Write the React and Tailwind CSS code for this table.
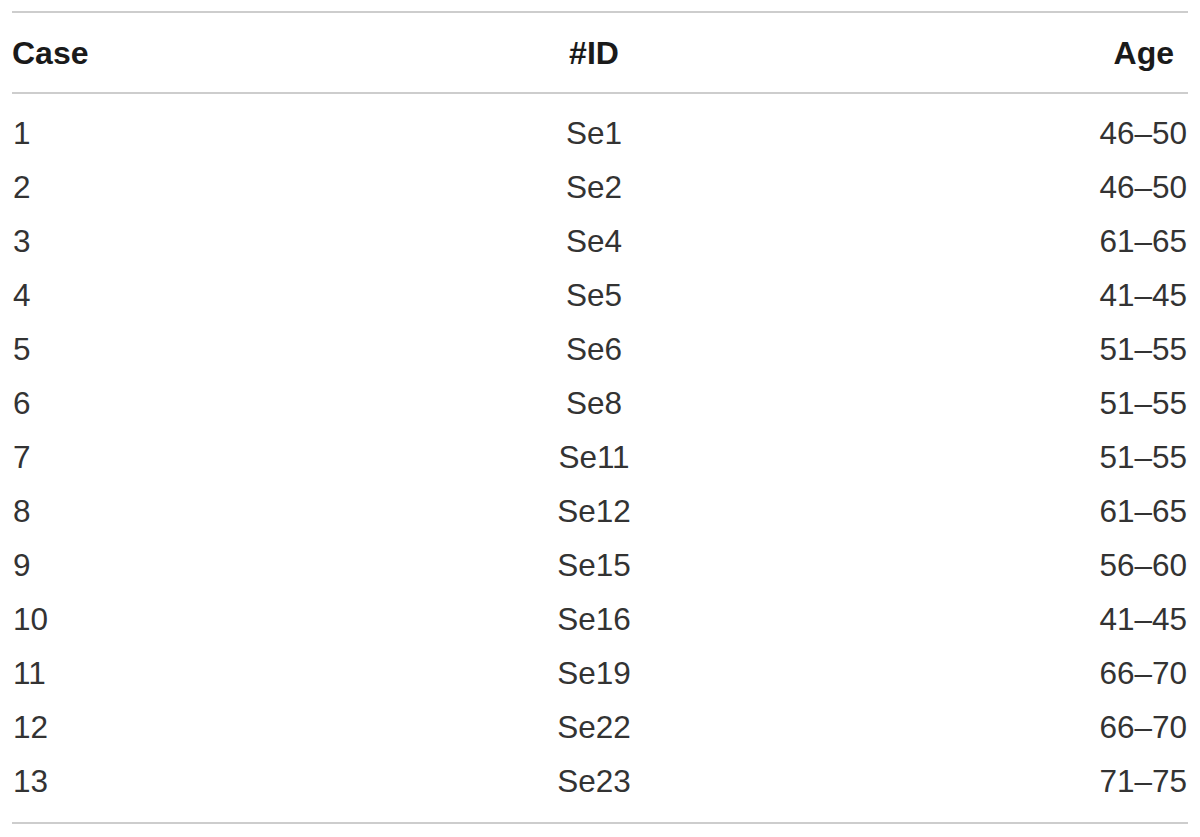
import React from "react";

const rows = [
  ["1", "Se1", "46–50"],
  ["2", "Se2", "46–50"],
  ["3", "Se4", "61–65"],
  ["4", "Se5", "41–45"],
  ["5", "Se6", "51–55"],
  ["6", "Se8", "51–55"],
  ["7", "Se11", "51–55"],
  ["8", "Se12", "61–65"],
  ["9", "Se15", "56–60"],
  ["10", "Se16", "41–45"],
  ["11", "Se19", "66–70"],
  ["12", "Se22", "66–70"],
  ["13", "Se23", "71–75"],
];

export default function App() {
  return (
    <div className="w-[1200px] h-[837px] bg-white pt-[11px] px-[12px] font-['Liberation_Sans',Arial,sans-serif] text-[#333]">
      {/* header */}
      <div className="border-t-2 border-b-2 border-[#cdcdcd] h-[83px] grid grid-cols-[522px_120px_1fr] items-center text-[32px] font-bold text-[#1a1a1a]">
        <div className="leading-none">Case</div>
        <div className="leading-none text-center">#ID</div>
        <div className="leading-none text-right pr-[14px]">Age</div>
      </div>

      {/* body */}
      <div className="py-[13px] border-b-2 border-[#cdcdcd]">
        {rows.map(([c, id, age]) => (
          <div key={c} className="h-[54px] grid grid-cols-[522px_120px_1fr] items-center text-[31.5px] leading-none">
            <div className="pl-[1px]">{c}</div>
            <div className="text-center">{id}</div>
            <div className="text-right pr-[1px]">{age}</div>
          </div>
        ))}
      </div>
    </div>
  );
}
